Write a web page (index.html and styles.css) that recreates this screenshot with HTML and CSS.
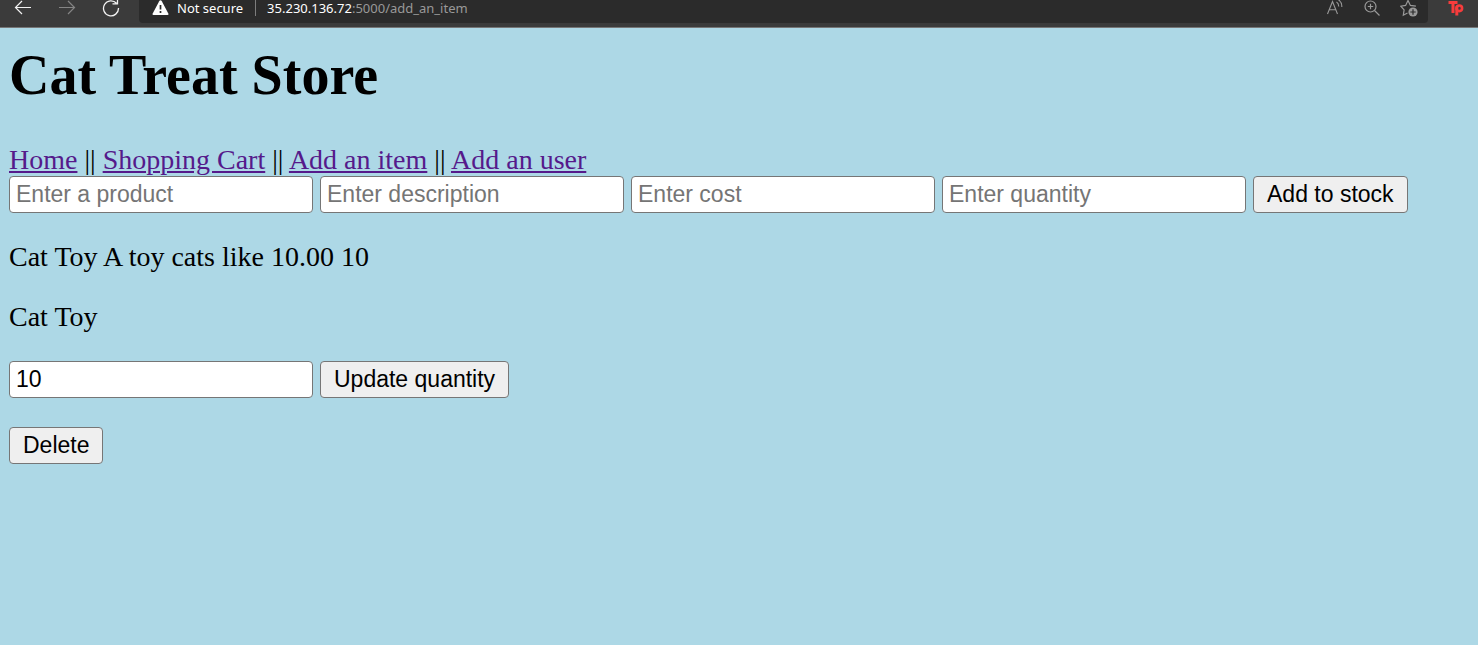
FILE: index.html
```html
<!DOCTYPE html>
<html lang="en">
<head>
<meta charset="utf-8">
<title>Cat Treat Store</title>
<link rel="stylesheet" href="styles.css">
</head>
<body>
<header class="toolbar">
  <div class="nav-buttons">
    <button class="tool" type="button" aria-label="Back">
      <svg width="18" height="18" viewBox="0 0 18 18" fill="none" stroke="#f2f2f2" stroke-width="1.2"><path d="M17 8.500H1.500M8 2L1.500 8.500 8 15"/></svg>
    </button>
    <button class="tool" type="button" aria-label="Forward" disabled>
      <svg width="18" height="18" viewBox="0 0 18 18" fill="none" stroke="#858585" stroke-width="1.2"><path d="M1 8.500h15.500M10 2l6.500 6.500L10 15"/></svg>
    </button>
    <button class="tool" type="button" aria-label="Refresh">
      <svg width="18" height="18" viewBox="0 0 18 18" fill="none" stroke="#f2f2f2" stroke-width="1.3"><path d="M14.500 4.200A7.500 7.500 0 1 0 16.500 9M15.500 0v4.800h-5"/></svg>
    </button>
  </div>
  <div class="address">
    <svg class="warning" width="17" height="16" viewBox="0 0 17 16"><path d="M8.500 .3Q9.300 .3 9.800 1.200L16.300 13.400Q17 15 15.500 15H1.500Q0 15 .7 13.400L7.200 1.200Q7.700 .3 8.500 .3z" fill="#fff"/><path d="M8.500 5v4.600M8.500 11v2" stroke="#2b2b2b" stroke-width="1.700"/></svg>
    <span class="security">Not secure</span>
    <span class="url"><span class="host">35.230.136.72</span>:5000/add_an_item</span>
    <div class="page-tools">
      <button class="tool" type="button" aria-label="Read aloud">
        <svg width="18" height="18" viewBox="0 0 18 18" fill="none" stroke="#999" stroke-width="1.100"><path d="M1.500 15L6.500 2.500 11.500 15M3.200 10.800h6.600M10.500 3q2.300 1.500 2.200 4.500M12.500 .8q3.600 2.500 3.300 7.200"/></svg>
      </button>
      <button class="tool" type="button" aria-label="Zoom">
        <svg width="18" height="18" viewBox="0 0 18 18" fill="none" stroke="#999" stroke-width="1.200"><circle cx="7.500" cy="7.500" r="5.500"/><path d="M11.500 11.500l5 5M7.500 4.800v5.400M4.800 7.500h5.400"/></svg>
      </button>
      <button class="tool" type="button" aria-label="Add to favorites">
        <svg width="18" height="18" viewBox="0 0 18 18" fill="none" stroke="#999" stroke-width="1.200"><path d="M7.500 14l-4.200 2.200.8-5.300L.8 7.200l4.800-.8L8 1.500l2.400 4.900 5.500.8"/><circle cx="13" cy="13" r="4.600" fill="#999" stroke="none"/><path d="M13 10.300v5.400M10.300 13h5.400" stroke="#2b2b2b"/></svg>
      </button>
    </div>
  </div>
  <button class="tool extension" type="button" aria-label="Extension">
    <svg width="16" height="16" viewBox="0 0 16 16" fill="none" stroke="#f73c3c" stroke-width="3"><path d="M.5 1.500h9M5 1.500V12"/><path d="M8.800 14.500V5.500"/><circle cx="11.300" cy="7.300" r="2.800" stroke-width="2.600"/></svg>
  </button>
</header>
<main class="store">
  <h1 class="title">Cat Treat Store</h1>
  <nav class="links"><a href="#home">Home</a> || <a href="#cart">Shopping Cart</a> || <a href="#item">Add an item</a> || <a href="#user">Add an user</a></nav>
  <form class="row">
    <input class="field" type="text" placeholder="Enter a product" aria-label="Product">
    <input class="field" type="text" placeholder="Enter description" aria-label="Description">
    <input class="field" type="text" placeholder="Enter cost" aria-label="Cost">
    <input class="field" type="text" placeholder="Enter quantity" aria-label="Quantity">
    <button class="button" type="button">Add to stock</button>
  </form>
  <p class="text">Cat Toy A toy cats like 10.00 10</p>
  <p class="text">Cat Toy</p>
  <form class="row">
    <input class="field" type="text" value="10" aria-label="Stock quantity">
    <button class="button" type="button">Update quantity</button>
  </form>
  <form class="row delete">
    <button class="button" type="button">Delete</button>
  </form>
</main>
</body>
</html>
```
FILE: styles.css
```css
* { box-sizing: border-box; }

body {
  margin: 0;
  background: #add8e6;
  color: #000;
  font: 28px/32px "Liberation Serif", "Times New Roman", serif;
}

.toolbar {
  display: flex;
  align-items: flex-start;
  height: 28px;
  background: #3b3b3b;
  border-bottom: 1px solid #767676;
  overflow: hidden;
  font: 13px/16px "Noto Sans", "Open Sans", sans-serif;
}

.nav-buttons {
  display: flex;
  gap: 26px;
  padding: 0 19px 0 14px;
}

.tool {
  display: flex;
  padding: 0;
  border: 0;
  background: none;
  margin-top: -1px;
}

.address {
  display: flex;
  flex: 1;
  align-items: flex-start;
  height: 23px;
  padding-left: 13px;
  background: #2b2b2b;
  border-radius: 0 0 4px 4px;
  color: #fff;
}

.security {
  margin-left: 8px;
  padding-right: 12px;
  border-right: 1px solid #7d7d7d;
}

.url {
  margin-left: 11px;
  color: #999;
}

.host { color: #fff; }

.page-tools {
  display: flex;
  gap: 19px;
  margin-left: auto;
  padding-right: 10px;
}

.extension { padding: 2px 14px 0 20px; }

.store { padding: 15px 9px; }

.title {
  margin: 0 0 37px;
  font-size: 56px;
  line-height: 64px;
}

.links a { color: #551a8b; }

.row {
  display: flex;
  flex-wrap: wrap;
  gap: 7px;
}

.field,
.button {
  height: 37px;
  border: 1px solid #767676;
  border-radius: 4px;
  font: 23px/27px "Liberation Sans", Arial, sans-serif;
  color: #000;
}

.field {
  width: 304px;
  padding: 2px 6px;
  background: #fff;
}

.field::placeholder { color: #757575; }

.button {
  padding: 2px 13px;
  background: #efefef;
}

.text { margin: 28px 0; }

.delete { margin-top: 29px; }
```
